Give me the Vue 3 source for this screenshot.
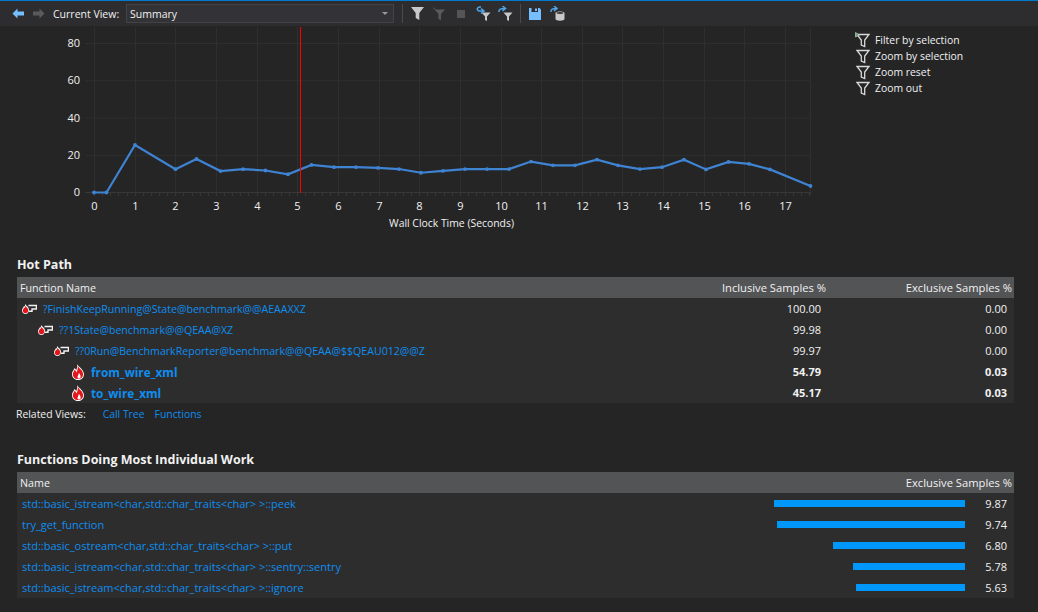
<template>
  <div class="page">
    <header class="toolbar">
      <svg class="back" width="12" height="11" viewBox="0 0 12 11"><path d="M5.5 0.5 L0.5 5.5 L5.5 10.5 V7.5 H12 V3.5 H5.5 Z" fill="#75beff" /></svg>
      <svg class="forward" width="12" height="11" viewBox="0 0 12 11"><path d="M6.5 0.5 L11.5 5.5 L6.5 10.5 V7.5 H0 V3.5 H6.5 Z" fill="#5a5a5a" /></svg>
      <span class="view-label">Current View:</span>
      <div class="view-select">
        <span>Summary</span>
        <i class="caret"></i>
      </div>
      <i class="sep sep-1"></i>
      <svg class="tb-filter" width="13" height="13" viewBox="0 0 13 13"><path d="M0 0 H13 L8.3 6 V13 L4.7 11 V6 Z" fill="#c8c8c8" /></svg>
      <svg class="tb-filter-off" width="12" height="13" viewBox="0 0 12 13"><path d="M1.5 2.5 H12 L8 7 V13 L5.5 12 V7 Z" fill="#5a5a5a" /><path d="M0 0 L3.5 2.5 H0.5 Z" fill="#4a4a4a" /></svg>
      <i class="stop"></i>
      <svg class="tb-sync-1" width="15" height="15" viewBox="0 0 15 15">
        <path d="M5.5 6.5 H14.5 L11 10.5 V15 L9 14 V10.5 Z" fill="#c8c8c8" />
        <path d="M5 1 C1 0.5 0 4 3 5 H7 M5 2.5 L8 5 L5 7.5" fill="none" stroke="#4ea6ea" stroke-width="1.5" />
      </svg>
      <svg class="tb-sync-2" width="15" height="15" viewBox="0 0 15 15">
        <path d="M5.5 6.5 H14.5 L11 10.5 V15 L9 14 V10.5 Z" fill="#c8c8c8" />
        <path d="M1 6 C0.5 3 3 2.5 7 2.5 M4.5 0 L7.5 2.5 L4.5 5" fill="none" stroke="#4ea6ea" stroke-width="1.5" />
      </svg>
      <i class="sep sep-2"></i>
      <svg class="tb-save" width="12" height="12" viewBox="0 0 12 12">
        <path d="M0 0 H10.5 L12 1.5 V12 H0 Z" fill="#75beff" />
        <path d="M2.5 0 H9 V4 H2.5 Z" fill="#2d2d30" />
        <path d="M6 0.5 H8 V3 H6 Z" fill="#75beff" />
      </svg>
      <svg class="tb-db" width="15" height="15" viewBox="0 0 15 15">
        <path d="M5.5 7 C5.5 5 14.5 5 14.5 7 V13 C14.5 15.3 5.5 15.3 5.5 13 Z" fill="#c8c8c8" />
        <ellipse cx="10" cy="7" rx="3.4" ry="0.9" fill="#3a3a3c" />
        <path d="M1 6 C0.5 3 3 2.5 6.5 2.5 M4 0 L7 2.5 L4 5" fill="none" stroke="#4ea6ea" stroke-width="1.5" />
      </svg>
    </header>

    <section class="chart-area">
      <svg class="chart" width="840" height="220" viewBox="0 26 840 220">
        <line v-for="s in xTicks" :key="'g' + s" :x1="xPos(s)" y1="27" :x2="xPos(s)" y2="193" class="grid" />
        <line x1="810.5" y1="27" x2="810.5" y2="195" class="grid" />
        <line v-for="v in yMinor" :key="'m' + v" x1="85" :y1="yPos(v)" x2="811" :y2="yPos(v)" class="grid" />
        <line x1="85" y1="192.5" x2="811" y2="192.5" class="axis" />
        <line v-for="s in xMinor" :key="'t' + s" :x1="xPos(s)" y1="193" :x2="xPos(s)" y2="196" class="axis" />
        <text v-for="v in yTicks" :key="'y' + v" x="80" :y="yPos(v) + 3.5" class="tick" text-anchor="end">{{ v }}</text>
        <text v-for="s in xTicks" :key="'x' + s" :x="xPos(s)" y="210" class="tick" text-anchor="middle">{{ s }}</text>
        <text x="451.5" y="227" class="tick axis-title" text-anchor="middle">Wall Clock Time (Seconds)</text>
        <polyline :points="linePoints" class="line" />
        <circle v-for="(p, i) in samples" :key="i" :cx="p[0]" :cy="yPos(p[1])" r="1.9" fill="#3f83d3" />
        <line x1="300.5" y1="27" x2="300.5" y2="193" stroke="#f00" stroke-width="1" />
      </svg>
      <ul class="chart-actions">
        <li v-for="(a, i) in chartActions" :key="a">
          <svg width="16" height="16" viewBox="0 0 16 16">
            <path d="M2 2.5 H14 L9.7 8 V14.5 L6.3 13 V8 Z" fill="none" stroke="#d8d8d8" stroke-width="1.3" />
            <path v-if="i === 0" d="M0.5 0.5 L4.5 3 L0.5 5 Z" fill="#5aa870" stroke="#d8d8d8" stroke-width="0.6" />
          </svg>
          <span>{{ a }}</span>
        </li>
      </ul>
    </section>

    <section class="hot-path">
      <h3>Hot Path</h3>
      <div class="table">
        <div class="thead">
          <span class="col-name">Function Name</span>
          <span class="col-num wide">Inclusive Samples %</span>
          <span class="col-num">Exclusive Samples %</span>
        </div>
        <div v-for="r in hotPath" :key="r.name" class="trow" :class="{ hot: r.hot }">
          <span class="col-name" :class="'indent-' + r.level">
            <svg v-if="r.hot" class="flame" width="12" height="16" viewBox="0 0 12 16">
              <path d="M5 0 C6 2.5 11.5 5 12 10 C12 14 9 16 6 16 C2.5 16 0 13.5 0 10 C0 7.5 1.5 6.5 2.5 4 C3.5 5 4 5.5 4.3 6 C5 4.5 5.5 2.5 5 0 Z" fill="#fff" />
              <path d="M5.7 1.8 C7 4.5 11.1 6.5 11.1 10.3 C11.1 13.3 9 15.1 6 15.1 C3 15.1 0.9 13.2 0.9 10.2 C0.9 8.5 2 7.5 2.8 5.6 C3.5 6.6 4.2 7.5 4.5 8.4 C5.5 6.5 6 4.5 5.7 1.8 Z" fill="#e3161c" />
              <path d="M6.8 8.8 C8.6 10.8 9 12.5 8.2 14.3 L6 14.5 C5.2 13.4 5.5 12.6 6 11.6 C6.5 10.8 6.8 10 6.8 8.8 Z" fill="#fff" />
            </svg>
            <svg v-else class="hand" width="15" height="10" viewBox="0 0 15 10">
              <path d="M3 0 C3.8 1.5 7 2.5 7 6 C7 8.5 5.2 10 3.5 10 C1.5 10 0 8.5 0 6.3 C0 4.5 1.2 4 1.7 2.5 C2.5 3 3.2 1.8 3 0 Z" fill="#fff" />
              <path d="M3.3 1.8 C4 3.2 6.2 4 6.2 6.5 C6.2 8 5.2 9.2 3.5 9.2 C1.8 9.2 0.8 7.9 0.8 6.4 C0.8 5.2 1.6 4.8 2 3.9 C2.7 4.3 3.5 3.3 3.3 1.8 Z" fill="#e3161c" />
              <path d="M6.5 1.5 H14.4 V5 H10 V7.2 H7" fill="none" stroke="#f2f2f2" stroke-width="1.4" />
            </svg>
            <a>{{ r.name }}</a>
          </span>
          <span class="col-num val">{{ r.incl }}</span>
          <span class="col-num val">{{ r.excl }}</span>
        </div>
      </div>
      <div class="related">
        <span>Related Views:</span>
        <a class="first">Call Tree</a>
        <a>Functions</a>
      </div>
    </section>

    <section class="individual">
      <h3>Functions Doing Most Individual Work</h3>
      <div class="table">
        <div class="thead">
          <span class="col-name">Name</span>
          <span class="col-num">Exclusive Samples %</span>
        </div>
        <div v-for="r in individual" :key="r.name" class="trow">
          <a class="col-name">{{ r.name }}</a>
          <span class="bar-cell"><i class="bar" :style="{ width: r.value * 19.35 + 'px' }"></i></span>
          <span class="bar-val">{{ r.value.toFixed(2) }}</span>
        </div>
      </div>
    </section>
  </div>
</template>

<script setup>
const xTicks = [0, 1, 2, 3, 4, 5, 6, 7, 8, 9, 10, 11, 12, 13, 14, 15, 16, 17]
const xMinor = []
for (let i = 0; i <= 88; i++) xMinor.push(i / 5)
const yTicks = [0, 20, 40, 60, 80]
const yMinor = [20, 40, 60, 80]

const xPos = (s) => Math.round(94 + s * 40.65) + 0.5
const yPos = (v) => 192.5 - v * 1.8625

// x in pixels, y as sample value
const samples = [
  [94, 0], [106.5, 0], [135, 25.5], [175.5, 12.5], [196.5, 18], [220.5, 11.5], [243, 12.5], [265.5, 11.8],
  [288, 9.8], [311.5, 14.8], [334, 13.6], [356, 13.6], [378, 13.2], [399, 12.6], [421, 10.6],
  [443, 11.6], [465, 12.6], [487, 12.6], [509, 12.6], [531, 16.6], [553, 14.6], [575, 14.6],
  [597, 17.6], [618, 14.6], [640, 12.6], [662, 13.6], [684, 17.6], [706, 12.4], [728.5, 16.4],
  [749, 15.4], [770, 12.4], [810.5, 3.5]
]
const linePoints = samples.map((p) => p[0] + ',' + yPos(p[1])).join(' ')

const chartActions = ['Filter by selection', 'Zoom by selection', 'Zoom reset', 'Zoom out']

const hotPath = [
  { name: '?FinishKeepRunning@State@benchmark@@AEAAXXZ', incl: '100.00', excl: '0.00', level: 0 },
  { name: '??1State@benchmark@@QEAA@XZ', incl: '99.98', excl: '0.00', level: 1 },
  { name: '??0Run@BenchmarkReporter@benchmark@@QEAA@$$QEAU012@@Z', incl: '99.97', excl: '0.00', level: 2 },
  { name: 'from_wire_xml', incl: '54.79', excl: '0.03', level: 3, hot: true },
  { name: 'to_wire_xml', incl: '45.17', excl: '0.03', level: 3, hot: true }
]

const individual = [
  { name: 'std::basic_istream<char,std::char_traits<char> >::peek', value: 9.87 },
  { name: 'try_get_function', value: 9.74 },
  { name: 'std::basic_ostream<char,std::char_traits<char> >::put', value: 6.8 },
  { name: 'std::basic_istream<char,std::char_traits<char> >::sentry::sentry', value: 5.78 },
  { name: 'std::basic_istream<char,std::char_traits<char> >::ignore', value: 5.63 }
]
</script>

<style>
html,
body {
  margin: 0;
  background: #252526;
  overflow: hidden;
}
</style>

<style scoped>
.page {
  width: 1038px;
  height: 612px;
  background: #252526;
  color: #f1f1f1;
  font-family: "Open Sans", "Noto Sans", sans-serif;
  font-size: 11px;
  overflow: hidden;
}

.toolbar {
  height: 25px;
  border-top: 1px solid #007acc;
  background: #2d2d30;
  display: flex;
  align-items: center;
  padding-left: 12px;
}

.toolbar svg,
.toolbar i {
  flex: none;
}

.forward { margin-left: 9px; }
.tb-filter { margin-left: 8px; }
.tb-filter-off { margin-left: 9px; }
.tb-sync-2 { margin-left: 7px; }
.tb-save { margin-left: 8px; }
.tb-db { margin-left: 9px; }

.view-label {
  width: 73px;
  margin-left: 8px;
  font-size: 10.5px;
  white-space: nowrap;
}

.view-select {
  box-sizing: border-box;
  width: 268px;
  height: 19px;
  border: 1px solid #434346;
  background: #333337;
  display: flex;
  align-items: center;
  justify-content: space-between;
  padding: 0 5px 0 3px;
  font-size: 10.5px;
}

.caret {
  border-left: 3px solid transparent;
  border-right: 3px solid transparent;
  border-top: 3px solid #999;
}

.sep {
  width: 1px;
  height: 19px;
  background: #4a4a4d;
}

.sep-1 { margin-left: 8px; }
.sep-2 { margin-left: 7px; }

.stop {
  width: 8px;
  height: 8px;
  margin-left: 12px;
  background: #555;
}

.tb-sync-1 {
  margin-left: 11px;
}

.chart-area {
  display: flex;
  height: 220px;
}

.chart {
  display: block;
  flex: none;
}

.grid {
  stroke: #2f2f2f;
  stroke-width: 1;
}

.axis {
  stroke: #383838;
  stroke-width: 1;
}

.tick {
  fill: #f1f1f1;
  font-size: 11px;
}

.axis-title {
  font-size: 10.4px;
}

.line {
  fill: none;
  stroke: #3f83d3;
  stroke-width: 2.2;
}

.chart-actions {
  list-style: none;
  margin: 6px 0 0 15px;
  padding: 0;
  font-size: 10.4px;
}

.chart-actions li {
  display: flex;
  align-items: center;
  gap: 4px;
  height: 16px;
}

h3 {
  margin: 0 0 3px 17px;
  font-size: 12.5px;
  font-weight: 700;
  line-height: 18px;
  color: #f1f1f1;
}

.table {
  margin-left: 17px;
  width: 997px;
  background: #2d2d2d;
}

.thead {
  height: 21px;
  background: #535456;
  display: flex;
  align-items: center;
  padding: 0 2px 0 3px;
}

.thead .col-num {
  font-size: 11.2px;
}

.thead .col-name {
  font-size: 10.7px;
}

.trow {
  height: 21px;
  display: flex;
  align-items: center;
  padding-right: 7px;
  padding-left: 5px;
}

.col-name {
  flex: 1;
  min-width: 0;
  display: flex;
  align-items: center;
  white-space: nowrap;
}

a {
  color: #0e8ef0;
}

.hot-path .col-name a {
  font-size: 10.6px;
}

.hand {
  margin-right: 6px;
  flex: none;
}

.flame {
  margin-right: 7px;
  flex: none;
}

.indent-1 { padding-left: 16px; }
.indent-2 { padding-left: 32px; }
.indent-3 { padding-left: 50px; }

.col-num {
  width: 186px;
  text-align: right;
}

.hot {
  font-weight: 700;
}

.hot-path .hot .col-name a {
  font-size: 11.8px;
}

.hot-path h3 {
  margin-top: 10px;
}

.related {
  margin: 3px 0 0 16px;
  height: 16px;
  display: flex;
  align-items: center;
  gap: 10px;
  font-size: 10.4px;
}

.related .first {
  margin-left: 7px;
}

.individual {
  margin-top: 29px;
}

.bar-cell {
  width: 200px;
  display: flex;
  justify-content: flex-end;
}

.bar {
  height: 7px;
  background: #0097fb;
}

.bar-val {
  width: 42px;
  text-align: right;
}
</style>
